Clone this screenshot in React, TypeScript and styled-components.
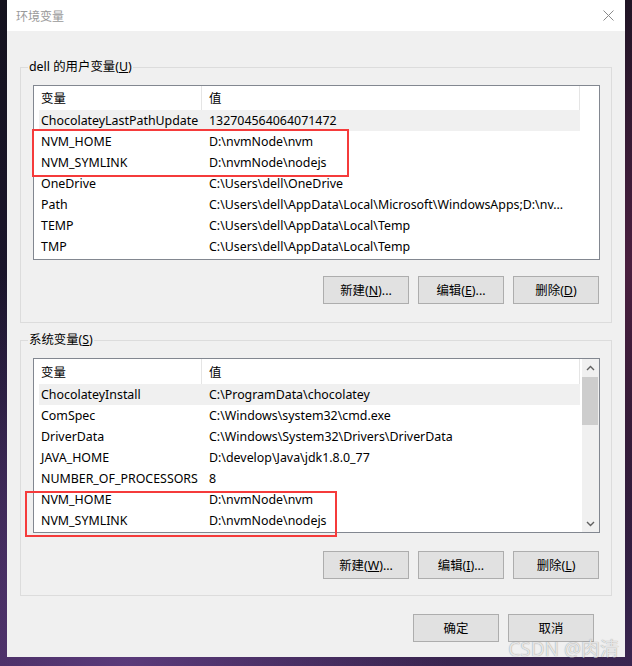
import React from "react";
import styled, { createGlobalStyle } from "styled-components";

const GlobalStyle = createGlobalStyle`
  html, body { margin: 0; padding: 0; }
  body {
    background: #150f20;
    font-family: "Noto Sans", "Noto Sans CJK SC", sans-serif;
  }
  * { box-sizing: border-box; }
`;

const Screen = styled.div`
  position: relative;
  width: 632px;
  height: 666px;
  padding: 0 7px 9px 7px;
  overflow: hidden;
  background:
    radial-gradient(ellipse at 20% 100%, #5a3a7a 0%, rgba(60, 30, 80, 0) 45%),
    radial-gradient(ellipse at 100% 40%, #4a1f3f 0%, rgba(40, 15, 35, 0) 60%),
    linear-gradient(180deg, #14121e 0%, #1d1630 60%, #3a2550 100%);
`;

const Window = styled.div`
  height: 657px;
  background: #f0f0f0;
  display: flex;
  flex-direction: column;
`;

const TitleBar = styled.div`
  height: 31px;
  background: #ffffff;
  display: flex;
  align-items: center;
  justify-content: space-between;
  padding: 0 11px 0 9px;
  flex-shrink: 0;
`;

const Title = styled.span`
  font-size: 12px;
  color: #999999;
`;

const Content = styled.div`
  padding: 28px 13px 0 13px;
  display: flex;
  flex-direction: column;
  gap: 9px;
`;

const Group = styled.fieldset<{ $top: number; $gap: number; $bottom: number }>`
  margin: 0;
  min-width: 0;
  border: 1px solid #dcdcdc;
  padding: ${(p) => p.$top}px 11px ${(p) => p.$bottom}px 12px;
  display: flex;
  flex-direction: column;
  gap: ${(p) => p.$gap}px;
`;

const Legend = styled.legend`
  font-size: 12.4px;
  line-height: 16px;
  color: #000;
  padding: 0 1px;
  margin-left: -5px;
`;

const ListBox = styled.div`
  height: 175px;
  border: 1px solid #828790;
  background: #ffffff;
  display: flex;
  overflow: hidden;
`;

const ListMain = styled.div`
  flex: 1;
  min-width: 0;
  display: flex;
  flex-direction: column;
`;

const HeaderRow = styled.div<{ $h: number }>`
  display: flex;
  height: ${(p) => p.$h}px;
  flex-shrink: 0;
`;

const HeaderCell = styled.div<{ $w: number }>`
  width: ${(p) => p.$w}px;
  flex-shrink: 0;
  padding-left: 7px;
  border-right: 1px solid #e5e5e5;
  font-size: 12.4px;
  display: flex;
  align-items: center;
  color: #000;
`;

const Rows = styled.div`
  padding-left: 5px;
  display: flex;
  flex-direction: column;
`;

const Row = styled.div<{ $selected?: boolean }>`
  display: flex;
  width: 541px;
  height: 21px;
  background: ${(p) => (p.$selected ? "#f0f0f0" : "transparent")};
  flex-shrink: 0;
`;

const Cell = styled.div<{ $w: number; $pad: number }>`
  width: ${(p) => p.$w}px;
  flex-shrink: 0;
  padding-left: ${(p) => p.$pad}px;
  font-size: 12.4px;
  line-height: 21px;
  color: #000;
  white-space: nowrap;
  overflow: hidden;
`;

const ScrollBar = styled.div`
  width: 17px;
  flex-shrink: 0;
  background: #f0f0f0;
  display: flex;
  flex-direction: column;
`;

const ArrowBtn = styled.div`
  height: 17px;
  display: flex;
  align-items: center;
  justify-content: center;
  flex-shrink: 0;
`;

const Track = styled.div`
  flex: 1;
  padding: 1px 1px 0 0;
`;

const Thumb = styled.div`
  height: 48px;
  background: #cdcdcd;
`;

const ButtonRow = styled.div`
  display: flex;
  justify-content: flex-end;
  gap: 9px;
  padding-right: 1px;
`;

const Button = styled.button`
  width: 86px;
  height: 28px;
  margin: 0;
  padding: 0;
  background: #e1e1e1;
  border: 1px solid #adadad;
  font-family: "Noto Sans", "Noto Sans CJK SC", sans-serif;
  font-size: 12.4px;
  color: #000;
  display: flex;
  align-items: center;
  justify-content: center;
`;

const Footer = styled.div`
  display: flex;
  justify-content: flex-end;
  gap: 9px;
  padding: 18px 31px 0 0;
`;

const Highlight = styled.div<{ $x: number; $y: number; $w: number; $h: number }>`
  position: absolute;
  left: ${(p) => p.$x}px;
  top: ${(p) => p.$y}px;
  width: ${(p) => p.$w}px;
  height: ${(p) => p.$h}px;
  border: 2px solid #f53b3b;
  pointer-events: none;
`;

const Watermark = styled.div`
  position: absolute;
  right: 13px;
  bottom: 10px;
  font-family: "Noto Sans", "Noto Sans CJK SC", sans-serif;
  font-size: 19px;
  line-height: 14px;
  color: rgba(240, 240, 240, 0.9);
  text-shadow: 0 0 1px rgba(90, 90, 90, 0.7);
  white-space: nowrap;
`;

type Item = { name: string; value: string; selected?: boolean };

const userVars: Item[] = [
  { name: "ChocolateyLastPathUpdate", value: "132704564064071472", selected: true },
  { name: "NVM_HOME", value: "D:\\nvmNode\\nvm" },
  { name: "NVM_SYMLINK", value: "D:\\nvmNode\\nodejs" },
  { name: "OneDrive", value: "C:\\Users\\dell\\OneDrive" },
  { name: "Path", value: "C:\\Users\\dell\\AppData\\Local\\Microsoft\\WindowsApps;D:\\nv..." },
  { name: "TEMP", value: "C:\\Users\\dell\\AppData\\Local\\Temp" },
  { name: "TMP", value: "C:\\Users\\dell\\AppData\\Local\\Temp" },
];

const sysVars: Item[] = [
  { name: "ChocolateyInstall", value: "C:\\ProgramData\\chocolatey", selected: true },
  { name: "ComSpec", value: "C:\\Windows\\system32\\cmd.exe" },
  { name: "DriverData", value: "C:\\Windows\\System32\\Drivers\\DriverData" },
  { name: "JAVA_HOME", value: "D:\\develop\\Java\\jdk1.8.0_77" },
  { name: "NUMBER_OF_PROCESSORS", value: "8" },
  { name: "NVM_HOME", value: "D:\\nvmNode\\nvm" },
  { name: "NVM_SYMLINK", value: "D:\\nvmNode\\nodejs" },
];

const Chevron = ({ down }: { down?: boolean }) => (
  <svg width="9" height="6" viewBox="0 0 9 6">
    <path
      d={down ? "M1 1 L4.5 4.5 L8 1" : "M1 5 L4.5 1.5 L8 5"}
      fill="none"
      stroke="#606060"
      strokeWidth="1.4"
    />
  </svg>
);

const CloseIcon = () => (
  <svg width="11" height="11" viewBox="0 0 11 11">
    <path d="M0.5 0.5 L10.5 10.5 M10.5 0.5 L0.5 10.5" stroke="#8a8a8a" strokeWidth="1" />
  </svg>
);

const VarList = ({ items, scroll, headerH }: { items: Item[]; scroll?: boolean; headerH: number }) => (
  <ListBox>
    <ListMain>
      <HeaderRow $h={headerH}>
        <HeaderCell $w={168}>变量</HeaderCell>
        <HeaderCell $w={378}>值</HeaderCell>
      </HeaderRow>
      <Rows>
        {items.map((it) => (
          <Row key={it.name} $selected={it.selected}>
            <Cell $w={163} $pad={2}>{it.name}</Cell>
            <Cell $w={378} $pad={7}>{it.value}</Cell>
          </Row>
        ))}
      </Rows>
    </ListMain>
    {scroll && (
      <ScrollBar>
        <ArrowBtn>
          <Chevron />
        </ArrowBtn>
        <Track>
          <Thumb />
        </Track>
        <ArrowBtn>
          <Chevron down />
        </ArrowBtn>
      </ScrollBar>
    )}
  </ListBox>
);

const Label = ({ text, key_, suffix }: { text: string; key_: string; suffix?: string }) => (
  <span>
    {text}(<u>{key_}</u>){suffix}
  </span>
);

export default function App() {
  return (
    <>
      <GlobalStyle />
      <Screen>
        <Window>
          <TitleBar>
            <Title>环境变量</Title>
            <CloseIcon />
          </TitleBar>
          <Content>
            <Group $top={10} $gap={16} $bottom={18}>
              <Legend>
                dell 的用户变量(<u>U</u>)
              </Legend>
              <VarList items={userVars} headerH={24} />
              <ButtonRow>
                <Button>
                  <Label text="新建" key_="N" suffix="..." />
                </Button>
                <Button>
                  <Label text="编辑" key_="E" suffix="..." />
                </Button>
                <Button>
                  <Label text="删除" key_="D" />
                </Button>
              </ButtonRow>
            </Group>
            <Group $top={10} $gap={18} $bottom={16}>
              <Legend>
                系统变量(<u>S</u>)
              </Legend>
              <VarList items={sysVars} scroll headerH={25} />
              <ButtonRow>
                <Button>
                  <Label text="新建" key_="W" suffix="..." />
                </Button>
                <Button>
                  <Label text="编辑" key_="I" suffix="..." />
                </Button>
                <Button>
                  <Label text="删除" key_="L" />
                </Button>
              </ButtonRow>
            </Group>
          </Content>
          <Footer>
            <Button>确定</Button>
            <Button>取消</Button>
          </Footer>
        </Window>
        <Highlight $x={32} $y={129} $w={317} $h={48} />
        <Highlight $x={25} $y={491} $w={312} $h={46} />
        <Watermark>CSDN @肉清</Watermark>
      </Screen>
    </>
  );
}
